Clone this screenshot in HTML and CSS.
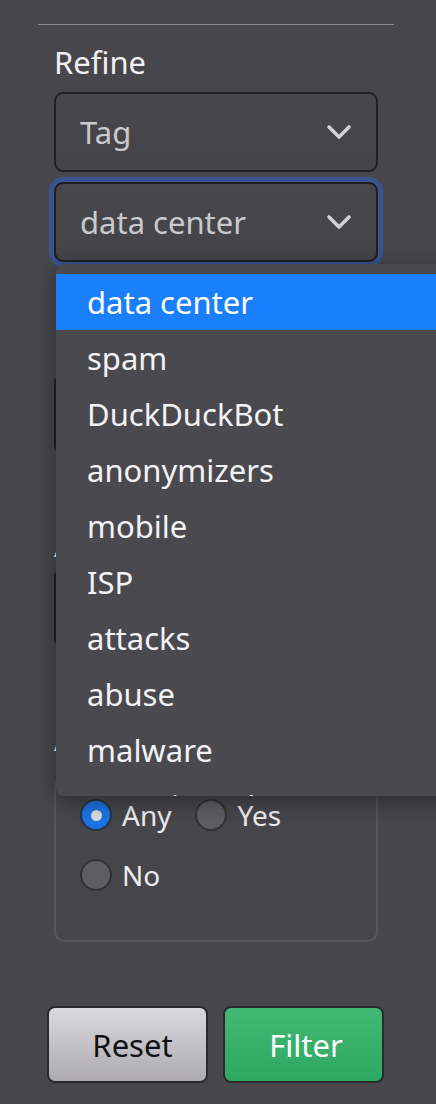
FILE: index.html
```html
<!DOCTYPE html>
<html lang="en">
<head>
<meta charset="utf-8">
<title>Refine</title>
<link rel="stylesheet" href="styles.css">
</head>
<body>
<div class="sidebar">
  <hr class="rule">
  <div class="section">
    <div class="title">Refine</div>
    <div class="select">
      <span class="select-text">Tag</span>
      <svg class="chev" viewBox="0 0 26 16" width="26" height="16"><polyline points="3,3 13,13 23,3"/></svg>
    </div>
    <div class="select focused">
      <span class="select-text">data center</span>
      <svg class="chev" viewBox="0 0 26 16" width="26" height="16"><polyline points="3,3 13,13 23,3"/></svg>
    </div>
    <div class="label label-first">Country</div>
    <div class="select">
      <span class="select-text">Any</span>
      <svg class="chev" viewBox="0 0 26 16" width="26" height="16"><polyline points="3,3 13,13 23,3"/></svg>
    </div>
    <div class="label">ASN</div>
    <div class="select">
      <span class="select-text">Any</span>
      <svg class="chev" viewBox="0 0 26 16" width="26" height="16"><polyline points="3,3 13,13 23,3"/></svg>
    </div>
    <div class="label">Anonymous</div>
    <div class="radio-box">
      <div class="radios">
        <label class="radio-item"><span class="radio checked"></span><span class="radio-label">Any</span></label>
        <label class="radio-item"><span class="radio"></span><span class="radio-label">Yes</span></label>
        <label class="radio-item"><span class="radio"></span><span class="radio-label">No</span></label>
      </div>
    </div>
  </div>
  <div class="buttons">
    <button class="btn btn-reset">Reset</button>
    <button class="btn btn-filter">Filter</button>
  </div>
</div>

<ul class="dropdown">
  <li class="opt active">data center</li>
  <li class="opt">spam</li>
  <li class="opt">DuckDuckBot</li>
  <li class="opt">anonymizers</li>
  <li class="opt">mobile</li>
  <li class="opt">ISP</li>
  <li class="opt">attacks</li>
  <li class="opt">abuse</li>
  <li class="opt">malware</li>
  <li class="opt">tor exit nodes</li>
</ul>
</body>
</html>
```

FILE: styles.css
```css
html, body {
  margin: 0;
  padding: 0;
  overflow: hidden;
}
body {
  background: #47464b;
  font-family: "Noto Sans", "Open Sans", sans-serif;
  width: 436px;
  height: 1104px;
  position: relative;
}
.sidebar {
  width: 356px;
  margin-left: 38px;
  padding-top: 24px;
}
.rule {
  margin: 0;
  border: 0;
  border-top: 1px solid #8b8a8f;
  height: 0;
}
.section {
  padding: 0 16px;
  display: flex;
  flex-direction: column;
}
.title {
  margin-top: 17px;
  font-size: 31px;
  line-height: 40px;
  color: #f1f1f3;
}
.select {
  box-sizing: border-box;
  height: 80px;
  margin-top: 10px;
  border: 2px solid #202024;
  border-radius: 9px;
  background: linear-gradient(#48474c, #444348);
  display: flex;
  align-items: center;
  justify-content: space-between;
  padding: 0 24px 0 24px;
}
.select.focused {
  box-shadow: 0 0 0 5px #38538e;
}
.select-text {
  font-size: 31px;
  line-height: 40px;
  color: #cacacd;
}
.chev {
  display: block;
  fill: none;
  stroke: #d2d2d5;
  stroke-width: 3.6;
  stroke-linecap: round;
  stroke-linejoin: round;
}
.label {
  margin-top: 76px;
  font-size: 26px;
  line-height: 34px;
  color: #f1f1f3;
}
.label + .select {
  margin-top: 4px;
}
.label-first {
  margin-top: 74px;
  padding-left: 3px;
}
.radio-box {
  box-sizing: border-box;
  margin-top: 19px;
  height: 165px;
  border: 2px solid #58575c;
  border-radius: 10px;
  padding: 20px 0 0 24px;
}
.radios {
  width: 220px;
  display: flex;
  flex-wrap: wrap;
  column-gap: 24px;
  row-gap: 28px;
}
.radio-item {
  display: flex;
  align-items: center;
  gap: 10px;
  height: 32px;
}
.radio {
  box-sizing: border-box;
  width: 32px;
  height: 32px;
  border-radius: 50%;
  background: #5e5d62;
  border: 2px solid #323137;
  display: flex;
  align-items: center;
  justify-content: center;
}
.radio.checked {
  background: #1b74e2;
  border-color: #2b3446;
}
.radio.checked::after {
  content: "";
  width: 11px;
  height: 11px;
  border-radius: 50%;
  background: #dcdcdc;
}
.radio-label {
  font-size: 28px;
  line-height: 32px;
  color: #ededf0;
}
.buttons {
  margin-top: 64px;
  padding: 0 10px 0 9px;
  display: grid;
  grid-template-columns: 161px 161px;
  column-gap: 15px;
}
.btn {
  box-sizing: border-box;
  height: 77px;
  border: 2px solid #2a292e;
  border-radius: 8px;
  font-family: "Noto Sans", "Open Sans", sans-serif;
  font-size: 31px;
  padding: 0;
}
.btn-reset {
  background: linear-gradient(#dad9de, #adabb1);
  color: #111;
  padding-left: 10px;
}
.btn-filter {
  background: linear-gradient(#42b874, #2da862);
  color: #fff;
  padding-left: 5px;
}
.dropdown {
  position: absolute;
  left: 56px;
  top: 264px;
  width: 410px;
  height: 532px;
  box-sizing: border-box;
  margin: 0;
  padding: 10px 0 0 0;
  list-style: none;
  overflow: hidden;
  background: #4a494e;
  border-radius: 8px;
  box-shadow: 0 6px 22px rgba(0, 0, 0, 0.38);
}
.opt {
  height: 56px;
  line-height: 56px;
  padding-left: 31px;
  font-size: 31px;
  color: #f3f3f5;
  white-space: nowrap;
}
.opt.active {
  background: #1a7ffa;
  color: #ffffff;
}
```
